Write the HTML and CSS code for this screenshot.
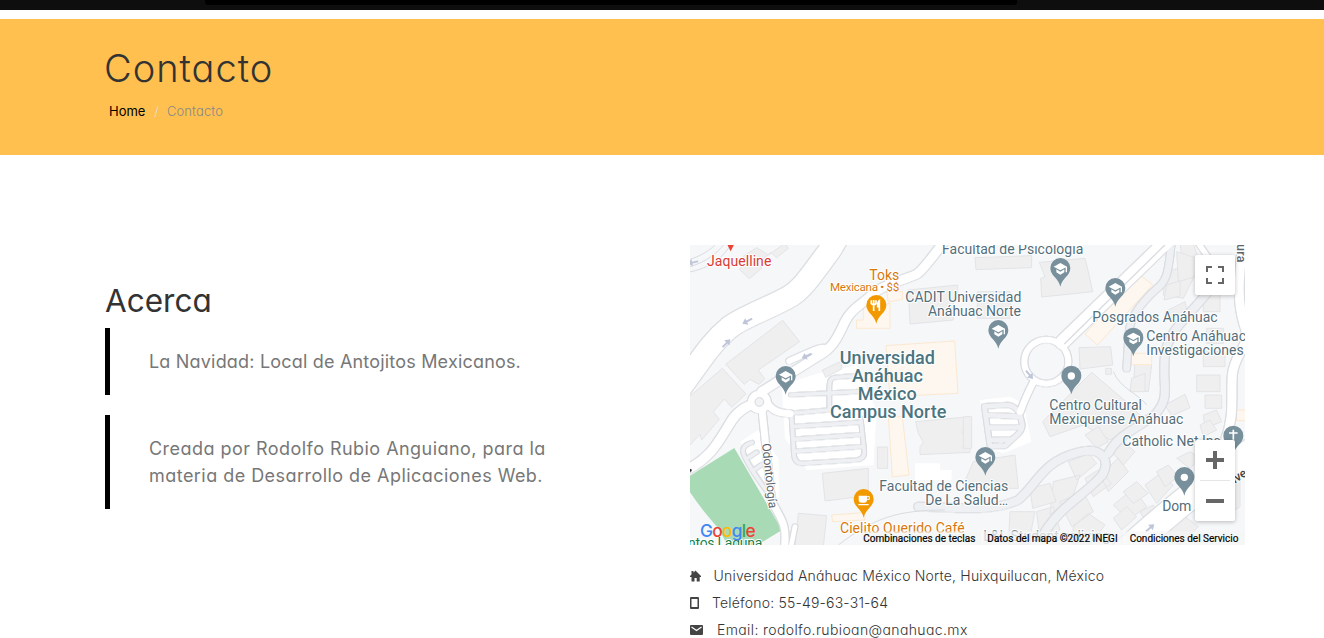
FILE: index.html
```html
<!DOCTYPE html>
<html lang="es">
<head>
<meta charset="utf-8">
<title>Contacto</title>
<link rel="stylesheet" href="styles.css">
</head>
<body>
<div class="topbar"><div class="topbar-panel"></div></div>
<header class="hero">
  <h1 class="hero-title">Contacto</h1>
  <nav class="breadcrumb"><a class="crumb-home">Home</a><span class="crumb-sep">/</span><span class="crumb-current">Contacto</span></nav>
</header>
<main class="content">
  <section class="about">
    <h2 class="about-title">Acerca</h2>
    <blockquote class="quote">La Navidad: Local de Antojitos Mexicanos.</blockquote>
    <blockquote class="quote wide">Creada por Rodolfo Rubio Anguiano, para la<br>materia de Desarrollo de Aplicaciones Web.</blockquote>
  </section>
  <section class="contact">
    <div class="map">
      <svg class="map-svg" viewBox="0 0 1665 900">
        <defs>
          <path id="pin" d="M0 0C-5-26-30-32-30-56a30 30 0 0 1 60 0C30-32 5-26 0 0z"/>
          <g id="school"><use href="#pin" class="pin-place"/><path d="M-20-60L0-71 20-60 0-49zM16-60h4v17h-4zM-12-52v9L0-36 12-43v-9L0-45z" fill="#fff"/></g>
          <g id="dot"><use href="#pin" class="pin-place"/><circle cy="-55" r="11" fill="#fff"/></g>
          <g id="arrow"><path d="M0 0l15-11v8h18v6H15v8z"/></g>
          <g id="roads-left">
            <path stroke-width="66" d="M452-40L420 15C370 82 340 130 300 154C250 184 160 215 120 246C60 295 30 350-30 430"/>
            <path stroke-width="27" d="M770-20C735 25 705 70 680 88C640 108 595 110 550 145C515 180 485 190 465 230C442 282 425 310 390 330L215 440"/>
            <path stroke-width="18" d="M415 312C390 300 365 320 298 348"/>
            <path stroke-width="28" d="M207 470C165 485 140 500 123 530C85 590 65 640-20 680"/>
            <path stroke-width="21" d="M230 470C245 500 270 504 300 506"/>
            <path stroke-width="21" d="M215 485L227 600L245 770C280 830 292 845 282 920"/>
            <path stroke-width="14" d="M315 845L300 920"/>
            <circle cx="208" cy="471" r="24" stroke-width="20"/>
          </g>
          <g id="lanes-left">
            <path d="M302 450L510 440M505 392L450 396C420 396 418 405 418 430V495L304 505M304 506L312 630Q314 657 340 655L500 645Q524 642 523 620L512 520M308 545L512 532M310 583L515 569M314 619L517 605"/>
            <path d="M186 593C155 600 155 620 165 637C185 680 210 710 235 745M177 637L200 622M196 672L215 659"/>
          </g>
          <g id="roads-right">
            <path stroke-width="42" d="M630-35L292 292"/>
            <circle cx="244" cy="350" r="66" stroke-width="18"/>
            <path stroke-width="20" d="M207 408C190 440 180 460 166 500"/>
            <path stroke-width="27" d="M835-20C825 80 812 150 836 235C865 300 808 320 802 390C797 460 810 510 780 590"/>
            <path stroke-width="78" d="M910 585C800 660 690 730 470 930"/>
            <path stroke-width="16" d="M690-20L745 60"/>
          </g>
          <g id="lanes-right">
            <path stroke-width="20" d="M620-20C610 110 600 110 560 145C510 195 490 230 490 290L485 370"/>
            <path stroke-width="24" d="M745 120C680 210 610 250 600 330C590 430 620 450 570 510C500 560 460 570 430 625"/>
            <path stroke-width="24" d="M-140 785C-50 785 80 805 160 765C220 715 230 650 340 622C405 605 440 640 412 690C360 750 290 780 240 860"/>
            <path stroke-width="14" d="M58 484L130 480Q155 485 165 510L172 540Q172 560 145 580L120 603L75 604M58 484L75 604M62 510L160 515M68 548L168 547M73 585L140 583"/>
          </g>
        </defs>
        <rect width="1665" height="900" fill="#f6f7f9"/>
        <g fill="#fff"><path d="M275 420L385 385 460 370 500 360 560 500 550 660 350 675 285 580zM150 590L205 555 265 640 268 760 240 740zM675 655H750V675H785V705H675zM870 465L960 455 1000 475 1024 590 940 625 890 610z"/></g>
        <path d="M-5 695L133 609 276 855 195 905H115L85 850C40 800 20 770-5 735z" fill="#a8dab5"/>
        <g class="building">
          <path d="M107 358L278 226 329 290 205 375 224 402 207 418 180 403 163 418zM-5 458L97 370 168 447 125 487 103 462 70 500 88 523 35 585 30 568-5 605zM148 73l22-20-10-20L200 8l35 22L285-5l10 15-35 28-18-16-38 35 12 12-38 32zM397 375l58-27v24l-48 25zM397 685L535 670V752L405 768zM325 805L410 812 400 905H315zM562 606h31v64h-31zM677 530L840 515 815 560 840 600V622L690 629V605L700 592 685 565zM655 135L803 120V150L790 160V225L660 237z"/>
          <path d="M855 38L1025 32V68L858 74zM1048 52L1185 40 1195 80 1208 140 1055 156 1052 100 1065 95zM862 140H960V220H862zM1167 308L1262 305 1268 360 1170 372zM1247 370h17v18h-17zM1058 530L1205 382 1320 480 1360 520 1260 585 1180 540 1080 575zM820 515H845V610H820zM850 650L975 630 985 730H880L820 720z"/>
          <path d="M1335 345L1385 360 1375 440 1330 435zM1425 85l70-30 20 35-35 70-60-10zM1470-5h40l18 55-48 12zM1425 200l60-30 10 45-65 5zM1540 130h50v70h-50zM1540 320h65v45h-65zM1520 390h70v50h-70zM1545 450h50v40h-50zM1425 480l60-32 15 40-55 25zM1540 510l40-15 15 35-50 20zM1460 640l40-20 30 20-30 30zM1365 720l40-30 45 30-50 55zM1270 780l60-50 40 55-55 40zM1230 690l55-50 30 40-60 60zM1265 620l35-30 35 30-35 40zM1135 650l60-25 25 30-60 50zM1090 710l80-20-20 60-70 60zM960 800h75l-20 100h-60zM1040 800l50-15 20 70-60 30zM1110 770l70-30 30 60-65 45zM1185 700l40-25 40 40-55 40zM1150 845l45-40 50 35-50 65h-50zM1430 860l55-45 40 30-55 55zM1565 690l50 25 35-20v90l-60 40z"/>
          <path d="M1325 400l40-15v55h-45zM1460 20l60 20-5 55-50 15zM1430 120l40-12v45l-48 12zM1550 250h50v45h-50zM1530 540l30-15 20 30-40 20zM1400 680l35-20 30 35-40 30zM1300 740l40-30 35 35-45 30zM1270 820l40-35 30 30-45 40zM1350 800l40-20 20 35-40 20zM1185 570l35 40 35-20-30-45zM1020 730l60-15 18 55-70 20z"/>
        </g>
        <g class="shop"><path d="M588 302L794 288 804 445 600 455zM520 185L600 175V250H500V225H520zM595 515H637L657 690 607 696zM425 810L520 803 525 825 428 830zM590 140h47v23l-42 8z"/><path d="M1345 85L1388 120 1222 300 1185 267zM1318 325h67v34h-67zM1640 495h30v32h-30z"/></g>
        <g class="casing lane-case"><use href="#lanes-left"/></g>
        <g class="casing"><use href="#roads-left"/></g>
        <g class="lane"><use href="#lanes-left"/></g>
        <g class="road"><use href="#roads-left"/></g>
        <g transform="translate(825 0)">
          <g class="casing"><use href="#lanes-right"/></g>
          <g class="casing"><use href="#roads-right"/></g>
          <g class="rl"><use href="#lanes-right"/></g>
          <g class="road"><use href="#roads-right"/></g>
          <path d="M625-25L298 297" fill="none" stroke="#d9dce0" stroke-width="4"/>
        </g>
        <circle cx="208" cy="471" r="13" fill="#f1f3f4" stroke="#d5d8dd" stroke-width="3"/>
        <g fill="none" stroke="#d9dce0" stroke-width="3"><path d="M-5 45C40 30 60 15 80-5M-5 82C55 70 95 45 125-5M0 65C50 50 80 25 105-5M445 900C550 820 620 795 765 795M1270 380C1290 430 1350 450 1370 480"/></g>
        <g fill="#c0c6d9"><use href="#arrow" transform="translate(157 236) rotate(-27)"/><use href="#arrow" transform="translate(121 283) rotate(135)"/><use href="#arrow" transform="translate(335 340) rotate(-25)"/><use href="#arrow" transform="translate(-8 56) rotate(-12)"/><use href="#arrow" transform="translate(1029 402) rotate(-130)"/><use href="#arrow" transform="translate(1393 838) rotate(140)"/></g>
        <path d="M110-5h24l-12 24z" fill="#ea4335"/>
        <g class="label school-label">
          <text x="756" y="27" textLength="424">Facultad de Psicología</text>
          <text x="646" y="172" textLength="348">CADIT Universidad</text>
          <text x="714" y="214" textLength="279">Anáhuac Norte</text>
          <text x="1207" y="232" textLength="376">Posgrados Anáhuac</text>
          <text x="1369" y="289" textLength="299">Centro Anáhuac</text>
          <text x="1369" y="331" textLength="292">Investigaciones</text>
          <text x="1078" y="496" textLength="278">Centro Cultural</text>
          <text x="1078" y="538" textLength="402">Mexiquense Anáhuac</text>
          <text x="1297" y="604" textLength="295">Catholic Net Inc</text>
          <text x="568" y="739" textLength="387">Facultad de Ciencias</text>
          <text x="706" y="781" textLength="248">De La Salud…</text>
          <text x="1417" y="798" textLength="87">Dom</text>
        </g>
        <g class="label campus">
          <text x="449" y="356" textLength="286">Universidad</text>
          <text x="486" y="410" textLength="213">Anáhuac</text>
          <text x="503" y="464" textLength="177">México</text>
          <text x="420" y="518" textLength="349">Campus Norte</text>
        </g>
        <text class="label red" x="51" y="63" textLength="193">Jaquelline</text>
        <g class="label orange">
          <text x="538" y="105" textLength="90">Toks</text>
          <text class="small" x="420" y="137" textLength="208">Mexicana • $$</text>
          <text x="450" y="864" textLength="374">Cielito Querido Café</text>
        </g>
        <text class="label street" transform="translate(216 596) rotate(84)" textLength="196">Odontología</text>
        <text class="label street dark-street" transform="translate(1642 -3) rotate(90)" textLength="55">ura</text>
        <text class="label street dark" transform="translate(1634 716) rotate(-33)">ive</text>
        <text class="label green" x="-6" y="909" textLength="223">ntos Laguna</text>
        <path d="M-2 670l8 4-4 9z" fill="#333"/>
        <use href="#school" x="287" y="449"/><use href="#school" x="925" y="311"/><use href="#school" x="1111" y="125"/><use href="#school" x="1276" y="185"/><use href="#school" x="1330" y="334"/><use href="#school" x="886" y="692"/>
        <use href="#dot" x="1144" y="448"/><use href="#dot" x="1483" y="752"/>
        <g transform="translate(1630 628)"><use href="#pin" class="pin-place"/><path d="M0-74v30M-13-64h26" class="cross"/></g>
        <g transform="translate(559 236)"><use href="#pin" class="pin-food"/><path d="M-8-71v33M-15-70v10q7 7 14 0v-10M9-38v-31q-6 5-5 18h5" class="utensils"/></g>
        <g transform="translate(521 818)"><use href="#pin" class="pin-food"/><path d="M-15-66h25v12q0 9-9 9h-7q-9 0-9-9zM-16-41h31v4h-31z" fill="#fff"/><path d="M10-63h7v8h-7" class="handle"/></g>
        <text class="google" x="30" y="875" textLength="167"><tspan fill="#4285f4">G</tspan><tspan fill="#ea4335">o</tspan><tspan fill="#fbbc04">o</tspan><tspan fill="#4285f4">g</tspan><tspan fill="#34a853">l</tspan><tspan fill="#ea4335">e</tspan></text>
        <text class="label faded" x="880" y="887" textLength="380">L&amp;L Student coliving</text>
        <rect x="516" y="859" width="1149" height="41" fill="#f5f5f5" fill-opacity=".7"/>
        <path d="M877 859v41M1303 859v41" stroke="#fff" stroke-opacity=".7" stroke-width="3"/>
        <g class="credit"><text x="520" y="892" textLength="336">Combinaciones de teclas</text><text x="892" y="892" textLength="391">Datos del mapa ©2022 INEGI</text><text x="1319" y="892" textLength="326">Condiciones del Servicio</text></g>
      </svg>
      <button class="map-button fullscreen" aria-label="Pantalla completa"><svg width="18" height="18" viewBox="0 0 18 18"><path d="M0 6V0h6v2H2v4zM12 0h6v6h-2V2h-4zM0 12h2v4h4v2H0zM16 12h2v6h-6v-2h4z"/></svg></button>
      <div class="zoom-control"><svg width="40" height="81" viewBox="0 0 40 81"><path d="M11 18h7v-7h4v7h7v4h-7v7h-4v-7h-7zM11 59h18v4H11z"/><path class="rule" d="M5 40h30v1H5z"/></svg></div>
    </div>
    <ul class="details">
      <li class="address"><svg class="icon" width="14" height="14" viewBox="0 0 14 14"><path d="M0 7L1.500 5.500V2h2v1.700L5.500 1.500 11 7v1H9.700v4.500H6.700V9H4.500v3.500H1.500V8H0z"/></svg><span>Universidad Anáhuac México Norte, Huixquilucan, México</span></li>
      <li class="phone"><svg class="icon" width="14" height="14" viewBox="0 0 14 14"><path fill-rule="evenodd" d="M1 1h7q1 0 1 1v10q0 1-1 1H1q-1 0-1-1V2q0-1 1-1zm.5 2v8h6V3z"/></svg><span>Teléfono: 55-49-63-31-64</span></li>
      <li class="email"><svg class="icon" width="14" height="14" viewBox="0 0 14 14"><path d="M1 2h11q1 0 1 1v8q0 1-1 1H1q-1 0-1-1V3q0-1 1-1z"/><path class="flap" d="M1.500 4L6.500 7.500 11.500 4"/></svg><span>Email: rodolfo.rubioan@anahuac.mx</span></li>
    </ul>
  </section>
</main>
</body>
</html>
```
FILE: styles.css
```css
body { margin: 0; height: 638px; overflow: hidden; background: #fff; font-family: Inter, "Open Sans", sans-serif; font-feature-settings: "cv11"; }
.topbar { height: 10px; background: #0e0e0e; }
.topbar-panel { width: 812px; height: 5px; margin-left: 205px; background: #000; border-radius: 0 0 3px 3px; }
.hero { box-sizing: border-box; height: 136px; margin-top: 9px; padding: 25px 0 0 104px; background: #ffc04f; }
.hero-title { margin: 0; font-size: 38px; line-height: 48px; font-weight: 300; color: #333; letter-spacing: 1px; }
.breadcrumb { display: flex; margin-top: 9px; padding-left: 5px; font-size: 13px; line-height: 20px; font-weight: 300; }
.crumb-home { width: 37px; color: #000; font-weight: 400; }
.crumb-sep { width: 21px; text-align: center; color: #ddd; }
.crumb-current { color: #888; letter-spacing: .1px; }
.content { display: grid; grid-template-columns: 585px 555px; padding: 90px 0 0 105px; }
.about { padding-top: 35px; }
.about-title { margin: 0; font-size: 31.5px; line-height: 42px; font-weight: 400; color: #333; }
.quote { box-sizing: border-box; margin: 6px 0 20px; padding: 20px 0 20px 39px; border-left: 5px solid #000; font-size: 18px; line-height: 27px; color: #777; white-space: nowrap; letter-spacing: .19px; }
.quote + .quote { margin-top: 0; }
.wide { letter-spacing: .46px; }
.map { position: relative; width: 555px; height: 300px; overflow: hidden; }
.map-svg { display: block; width: 555px; height: 300px; font-family: Roboto, sans-serif; font-feature-settings: normal; }
.building { fill: #efeff0; stroke: #e3e4e7; stroke-width: 3; }
.shop { fill: #fef7ef; stroke: #fce8d0; stroke-width: 3; }
.casing, .road, .lane, .rl { fill: none; stroke-linecap: round; stroke-linejoin: round; }
.casing { stroke: #d9dce0; filter: drop-shadow(2px 0 0 #d9dce0) drop-shadow(-2px 0 0 #d9dce0) drop-shadow(0 1.500px 0 #d9dce0) drop-shadow(0 -1.500px 0 #d9dce0); }
.lane-case, .lane { stroke-width: 11; }
.road { stroke: #fff; }
.lane, .rl { stroke: #eff0f3; }
.pin-place { fill: #78909c; }
.pin-food { fill: #f29900; }
.cross { stroke: #fff; stroke-width: 5; fill: none; }
.utensils { stroke: #fff; stroke-width: 5; fill: none; }
.handle { stroke: #fff; stroke-width: 3; fill: none; }
.label { font-size: 42px; paint-order: stroke; stroke: #fff; stroke-width: 6; stroke-linejoin: round; }
.school-label { fill: #546e7a; }
.campus { font-size: 54px; font-weight: 500; fill: #4b7480; }
.red { fill: #d93a34; }
.orange { fill: #d8780b; }
.small { font-size: 35px; }
.street { font-size: 37px; fill: #60646b; }
.dark-street { font-weight: 500; }
.dark { font-weight: 500; fill: #444; }
.green { fill: #188048; }
.faded { fill: #7d8d95; }
.google { font-family: Inter, sans-serif; font-size: 52px; font-weight: 500; }
.credit { font-size: 30px; fill: #000; stroke: #000; stroke-width: .5; }
.map-button, .zoom-control { position: absolute; right: 10px; width: 40px; padding: 0; border: 0; border-radius: 2px; background: #fff; box-shadow: 0 1px 4px rgba(0,0,0,.25); fill: #666; }
.fullscreen { top: 10px; height: 40px; }
.fullscreen svg { display: block; margin: auto; }
.zoom-control { top: 195px; height: 81px; }
.zoom-control svg { display: block; }
.rule { fill: #e6e6e6; }
.details { margin: 17px 0 0; padding: 0; list-style: none; font-size: 14px; line-height: 27px; font-weight: 300; color: #333; white-space: nowrap; letter-spacing: .19px; }
.details li { display: flex; align-items: center; }
.icon { flex: none; fill: #444; }
.flap { fill: none; stroke: #fff; stroke-width: 1.2; }
.address { gap: 9.500px; }
.phone { gap: 8px; }
.email { gap: 13px; letter-spacing: .38px; }
```
